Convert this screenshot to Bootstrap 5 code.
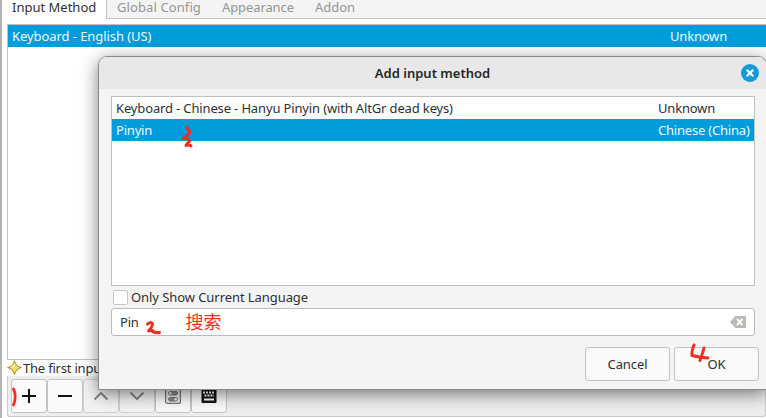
<!DOCTYPE html>
<html lang="en">
<head>
<meta charset="utf-8">
<title>Input Method Configuration</title>
<link href="https://cdn.jsdelivr.net/npm/bootstrap@5.3.0/dist/css/bootstrap.min.css" rel="stylesheet">
<style>
body{width:766px;height:418px;overflow:hidden;background:#fff;color:#303030;font:13px/22px "Noto Sans","Noto Sans CJK SC",sans-serif;letter-spacing:-.2px}
.window{width:766px;height:418px;border-left:2px solid #b4b4b4;overflow:hidden}
.tabs{height:19px;letter-spacing:0}
.tabs .nav-link{padding:0;color:#959595;line-height:18px;margin-top:-2px;height:19px}
.tabs .current{width:104px;padding-left:10px;color:#303030}
.tabs .global{letter-spacing:.1px}
.tabs .look{letter-spacing:-.1px}
.rest{background:#f4f4f4;border-left:1px solid #c3c3c3;border-bottom:1px solid #c3c3c3;padding-left:10px;gap:21px}
.methods{margin:5px 0 0 5px;height:336px;border:1px solid #c0c0c0;border-right:0}
.line{height:22px;padding-left:4px;white-space:nowrap}
.chosen{background:#009ddc;color:#ecf8fd}
.snug{letter-spacing:-.07px}
.layout-name{letter-spacing:-.145px}
.kind{width:96px}
.hint{height:16px;padding-left:5px;line-height:16px;white-space:nowrap}
.tools{height:41px;margin-left:5px;padding:3px 0 0 3px;background:#eee;border:1px solid #c8c8c8;border-top:0;border-radius:0 0 3px 3px}
.tool{width:36px;height:34px;padding:0;border:1px solid #c4c4c4;border-radius:3px;background:#fafafa}
.tool.off{background:#f3f3f3;border-color:#d0d0d0}
.dialog-box{left:98px;top:56px;width:669px;height:334px;background:#f4f4f4;border:1px solid #8a8a8a;border-radius:9px 9px 0 0;box-shadow:0 4px 17px rgba(0,0,0,.5);z-index:2}
.titlebar{height:32px;background:#e8e8e8;border-radius:8px 8px 0 0;font-weight:600;color:#262626;padding-right:7px;letter-spacing:0}
.titlebar .caption{padding-left:25px;margin-top:-1px}
.inner{padding:7px 11px 0 12px}
.results{height:190px;border:1px solid #c0c0c0;background:#fff}
.only{height:22px;padding:0 0 0 2px}
.tick{width:15px;height:15px;border:1px solid #c6c6c6;border-radius:2px;background:#fff;margin-right:3px}
.search{height:28px;border:1px solid #bcbcbc;border-radius:3px;background:#fff;padding:0 8px}
.actions{gap:4px;margin-top:11px;margin-right:-4px}
.actions .btn{width:85px;height:34px;padding:0;border:1px solid #c2c2c2;border-radius:3px;background:#fafafa;font-size:13px;line-height:20px;color:#303030;letter-spacing:-.1px}
.notes{left:0;top:0;z-index:3;pointer-events:none}
</style>
<script src="https://cdn.jsdelivr.net/npm/bootstrap@5.3.0/dist/js/bootstrap.bundle.min.js"></script>
</head>
<body class="position-relative">
<div class="window">
  <nav class="tabs d-flex">
    <a class="nav-link current">Input Method</a>
    <div class="rest d-flex flex-grow-1"><a class="nav-link global">Global Config</a><a class="nav-link look">Appearance</a><a class="nav-link">Addon</a></div>
  </nav>
  <div class="methods">
    <div class="line chosen d-flex justify-content-between"><span class="snug">Keyboard - English (US)</span><span class="kind">Unknown</span></div>
  </div>
  <div class="hint d-flex align-items-center">
    <svg width="16" height="16" viewBox="0 0 16 16"><path d="M7.500.8Q8.700 6.500 14.500 7.500Q8.700 8.700 7.500 14.700Q6.300 8.700.6 7.500Q6.300 6.500 7.500.8Z" fill="#efdc62" stroke="#a58b20"/><path d="M7.500 3.500L8 7.500L4 7.500Z" fill="#fff7bd"/></svg><span>The first input method will be inactive state.</span>
  </div>
  <div class="tools d-flex">
    <button class="btn tool d-flex align-items-center justify-content-center" aria-label="Add"><svg width="16" height="16"><path d="M8 1V15M1 8H15" stroke="#111" stroke-width="2"/></svg></button>
    <button class="btn tool d-flex align-items-center justify-content-center" aria-label="Remove"><svg width="16" height="16"><path d="M1 8H15" stroke="#111" stroke-width="2"/></svg></button>
    <button class="btn tool off d-flex align-items-center justify-content-center" aria-label="Move up"><svg width="16" height="16"><path d="M1.500 11.500L8 5L14.500 11.500" fill="none" stroke="#888" stroke-width="2"/></svg></button>
    <button class="btn tool off d-flex align-items-center justify-content-center" aria-label="Move down"><svg width="16" height="16"><path d="M1.500 4.500L8 11L14.500 4.500" fill="none" stroke="#888" stroke-width="2"/></svg></button>
    <button class="btn tool d-flex align-items-center justify-content-center" aria-label="Configure"><svg width="16" height="16"><rect x=".6" y=".6" width="14.800" height="14.800" rx="2" fill="#eee" stroke="#777" stroke-width="1.200"/><rect x="3.500" y="3.500" width="9" height="3.500" rx="1.750" fill="#8a8a8a" stroke="#777"/><rect x="3.500" y="9.500" width="9" height="3.500" rx="1.750" fill="#8a8a8a" stroke="#777"/><circle cx="5.300" cy="5.250" r="1.300" fill="#eee"/><circle cx="10.700" cy="11.250" r="1.300" fill="#eee"/></svg></button>
    <button class="btn tool d-flex align-items-center justify-content-center" aria-label="Keyboard layout"><svg width="16" height="16"><rect x=".5" y="1.500" width="15" height="13.500" rx="1" fill="#151515"/><path d="M2 4.500H14M3.500 7.500H13" stroke="#fff" stroke-width="2" stroke-dasharray="2 1"/><path d="M3 11.500H13" stroke="#fff" stroke-width="2"/></svg></button>
  </div>
</div>

<section class="dialog-box position-absolute">
  <header class="titlebar d-flex align-items-center">
    <div class="caption flex-grow-1 text-center">Add input method</div>
    <svg width="18" height="18"><circle cx="9" cy="9" r="9" fill="#149bd7"/><path d="M5.700 5.700L12.300 12.300M12.300 5.700L5.700 12.300" stroke="#fff" stroke-width="2.200"/></svg>
  </header>
  <div class="inner">
    <div class="results">
      <div class="line d-flex justify-content-between"><span class="layout-name">Keyboard - Chinese - Hanyu Pinyin (with AltGr dead keys)</span><span class="kind">Unknown</span></div>
      <div class="line chosen d-flex justify-content-between"><span>Pinyin</span><span class="kind">Chinese (China)</span></div>
    </div>
    <label class="only d-flex align-items-center"><span class="tick"></span><span class="snug">Only Show Current Language</span></label>
    <div class="search d-flex align-items-center justify-content-between"><span>Pin</span><svg width="16" height="12"><path d="M0 6L5.500 0H15Q16 0 16 1V11Q16 12 15 12H5.500Z" fill="#b9bab5"/><path d="M7 3L12.500 9M12.500 3L7 9" stroke="#fff" stroke-width="2"/></svg></div>
    <div class="actions d-flex justify-content-end"><button class="btn">Cancel</button><button class="btn">OK</button></div>
  </div>
</section>

<svg class="notes position-absolute" width="766" height="418" fill="none" stroke="#ed3023" stroke-linecap="round" stroke-linejoin="round">
  <path d="M13.500 389Q17 396 13.500 405" stroke-width="2.800"/>
  <path d="M147.500 324Q151.500 321 152.500 324Q152.500 327 148.500 331Q154 329.500 152.500 331.500Q156 333 159.500 332.500" stroke-width="3"/>
  <path d="M186.500 127.500Q191 131 189 134Q186 136.500 182.500 138.500Q188 137.500 189.500 141L186 145.500Q189 144 191 146" stroke-width="3"/>
  <path d="M694 345Q691.500 351 692 355.500Q700 357.500 708 358M704 348Q702.500 354 700 360.500" stroke-width="3"/>
  <text x="185.500" y="329" font-family="Noto Sans CJK SC, sans-serif" font-size="18" letter-spacing="0" fill="#ed3023" stroke="none">搜索</text>
</svg>
</body>
</html>
